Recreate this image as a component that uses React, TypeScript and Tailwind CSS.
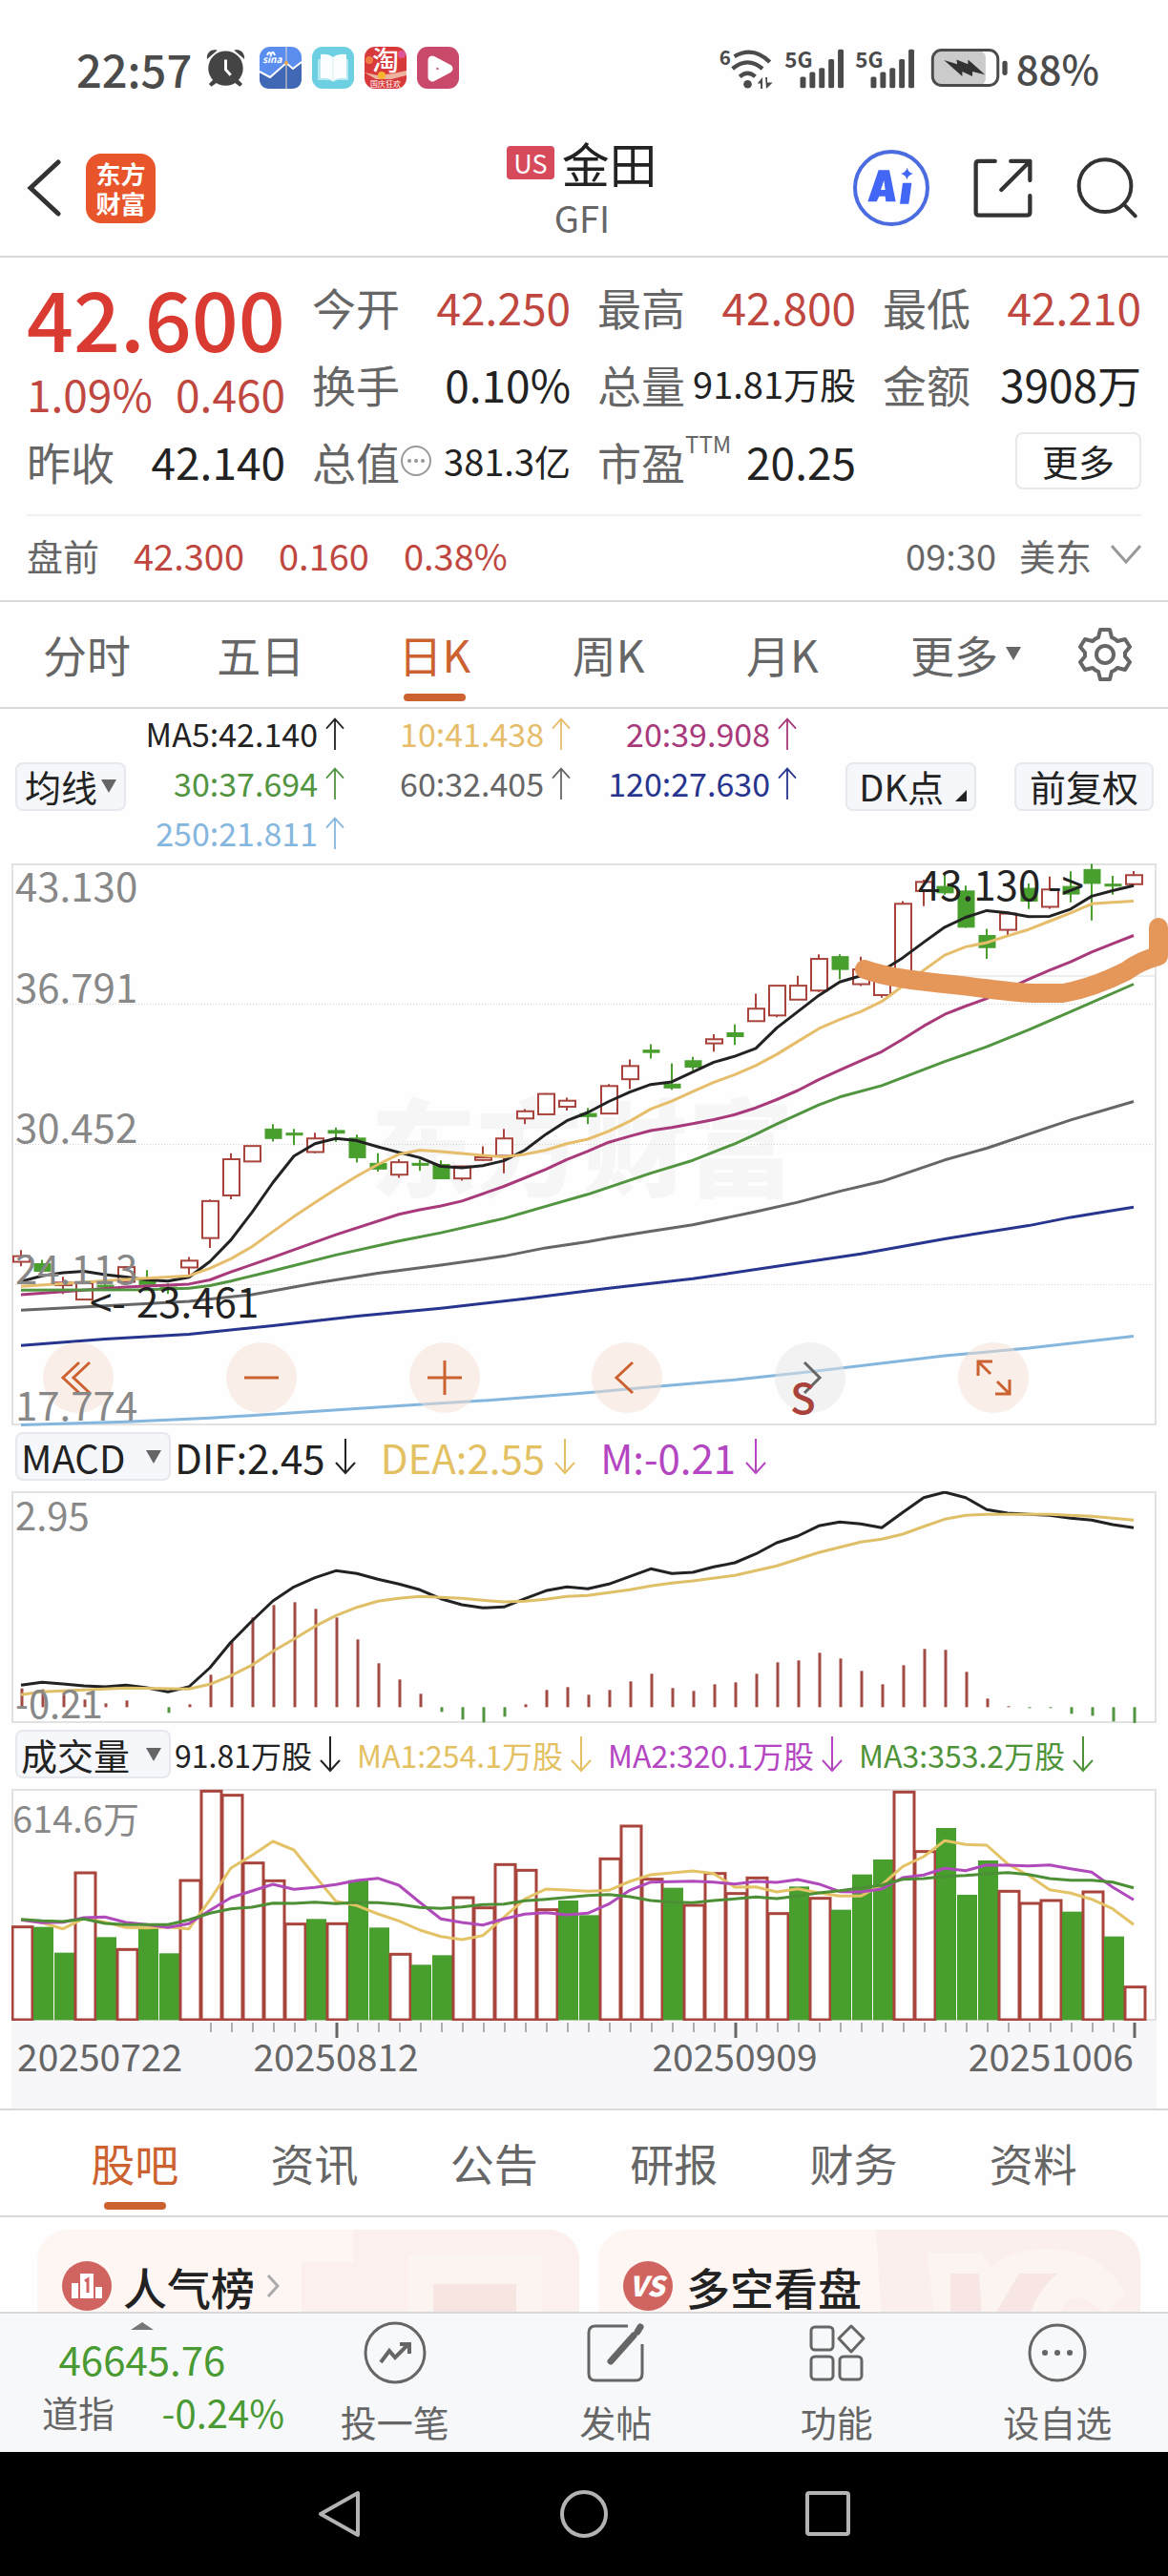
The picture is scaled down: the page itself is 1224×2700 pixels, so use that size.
import React, { useState } from 'react';

const RED = '#a8443c';
const GREEN = '#489f2e';
const STEP = 22;

type Kind = 'r' | 'g';
type Candle = [Kind, number, number, number, number];
type Bar = [Kind, number];
type Point = [number, number];

// kind, high, body top, body bottom, low
const candles: Candle[] = [
    ['r', 1062, 1078, 1093, 1105], ['g', 1088, 1098, 1118, 1122], ['r', 1133, 1148, 1155, 1178],
    ['r', 1148, 1150, 1193, 1193], ['g', 1138, 1155, 1158, 1165], ['r', 1105, 1107, 1146, 1148],
    ['g', 1115, 1140, 1153, 1155], ['g', 1150, 1160, 1163, 1178], ['r', 1080, 1090, 1108, 1130],
    ['r', 928, 932, 1030, 1056], ['r', 805, 821, 917, 927], ['r', 785, 786, 827, 827],
    ['g', 728, 741, 766, 774], ['g', 741, 752, 755, 784], ['r', 751, 766, 802, 805],
    ['g', 737, 745, 752, 775], ['g', 756, 765, 817, 830], ['g', 805, 832, 847, 854],
    ['r', 821, 829, 862, 870], ['g', 822, 832, 836, 852], ['g', 824, 835, 873, 873],
    ['r', 838, 840, 872, 878], ['r', 787, 816, 823, 826], ['r', 741, 766, 812, 858],
    ['r', 688, 694, 713, 728], ['r', 646, 648, 702, 703], ['r', 658, 666, 682, 692],
    ['g', 685, 700, 708, 728], ['r', 622, 627, 700, 702], ['r', 557, 574, 609, 635],
    ['g', 516, 532, 538, 554], ['g', 567, 622, 632, 637], ['g', 550, 560, 577, 585],
    ['r', 490, 503, 514, 536], ['g', 464, 486, 496, 518], ['r', 382, 422, 455, 456],
    ['r', 360, 361, 440, 445], ['r', 335, 361, 398, 398], ['r', 278, 290, 374, 378],
    ['g', 278, 284, 318, 344], ['r', 284, 318, 357, 362], ['r', 330, 340, 386, 393],
    ['r', 137, 144, 340, 340], ['r', 80, 86, 110, 150], ['g', 60, 98, 115, 120],
    ['g', 96, 110, 206, 208], ['g', 210, 228, 260, 290], ['r', 165, 170, 213, 227],
    ['g', 90, 103, 137, 158], ['r', 72, 106, 152, 157], ['g', 58, 98, 118, 140],
    ['g', 38, 53, 90, 188], ['g', 70, 92, 95, 120], ['r', 57, 68, 92, 96],
];

const series = (values: number[]): Point[] => values.map((v, i) => [i, v]);

const priceLines: { color: string; points: Point[] }[] = [
    { color: '#85b7de', points: [[0, 1525], [5, 1517], [9, 1507], [13, 1493], [18, 1475], [22, 1461], [27, 1440], [30, 1425], [34, 1406], [38, 1382], [44, 1342], [48, 1322], [53, 1290]] },
    { color: '#27358f', points: [[0, 1315], [4, 1298], [8, 1285], [12, 1262], [16, 1237], [20, 1216], [24, 1191], [28, 1163], [32, 1138], [36, 1105], [40, 1072], [44, 1032], [48, 997], [50, 975], [53, 948]] },
    { color: '#666666', points: [[0, 1221], [4, 1210], [8, 1198], [11, 1180], [14, 1150], [17, 1123], [20, 1102], [23, 1078], [25, 1056], [27, 1040], [28, 1030], [30, 1012], [32, 995], [35, 960], [37, 935], [39, 906], [41, 880], [44, 823], [46, 792], [50, 717], [53, 668]] },
    { color: '#a83a7b', points: [[0, 1180], [3, 1168], [5, 1160], [8, 1152], [9, 1141], [10, 1120], [12, 1081], [15, 1021], [18, 967], [19, 955], [20, 945], [21, 932], [23, 893], [25, 848], [26, 822], [27, 800], [28, 776], [29, 760], [30, 745], [31, 737], [32, 727], [33, 716], [34, 703], [35, 685], [36, 663], [37, 639], [38, 610], [39, 585], [40, 560], [41, 536], [42, 503], [43, 468], [44, 437], [45, 415], [46, 395], [47, 370], [48, 344], [49, 320], [50, 298], [51, 272], [52, 250], [53, 228]] },
    { color: '#529540', points: [[0, 1168], [6, 1167], [8, 1163], [9, 1156], [10, 1144], [12, 1117], [15, 1075], [18, 1038], [20, 1016], [23, 978], [25, 946], [27, 914], [30, 858], [32, 824], [34, 780], [35, 755], [36, 728], [38, 677], [39, 656], [41, 626], [44, 562], [46, 523], [48, 478], [50, 430], [53, 357]] },
    { color: '#222222', points: series([1145, 1130, 1122, 1118, 1127, 1133, 1141, 1144, 1134, 1092, 1035, 962, 883, 813, 780, 766, 772, 788, 803, 817, 840, 844, 838, 825, 797, 755, 719, 697, 668, 643, 623, 616, 590, 564, 548, 527, 473, 430, 387, 351, 335, 322, 287, 246, 206, 180, 162, 168, 178, 177, 158, 124, 109, 96]) },
    { color: '#e6bd6a', points: [[0, 1158], [3, 1147], [5, 1140], [8, 1130], [9, 1110], [10, 1085], [11, 1053], [12, 1013], [13, 973], [14, 936], [15, 900], [16, 866], [17, 835], [18, 808], [19, 797], [20, 801], [21, 806], [22, 811], [23, 815], [24, 808], [25, 797], [26, 780], [27, 768], [28, 747], [29, 720], [30, 688], [31, 667], [32, 642], [33, 617], [34, 597], [35, 573], [36, 543], [37, 509], [38, 475], [39, 451], [40, 430], [41, 403], [42, 362], [43, 320], [44, 280], [45, 258], [46, 247], [47, 229], [48, 212], [49, 190], [50, 168], [51, 144], [52, 140], [53, 137]] },
];

const macdBars = [835, 838, 855, 870, 882, 873, 894, 912, 885, 792, 688, 612, 573, 564, 585, 612, 681, 756, 807, 852, 909, 933, 942, 924, 885, 840, 831, 855, 840, 813, 789, 834, 843, 822, 816, 789, 753, 747, 723, 741, 780, 822, 762, 711, 714, 783, 867, 891, 897, 897, 915, 921, 939, 944];
const dif = series([825, 816, 821, 827, 830, 825, 833, 846, 830, 770, 690, 623, 560, 516, 487, 465, 474, 492, 507, 525, 553, 572, 582, 579, 553, 528, 516, 522, 507, 483, 459, 474, 470, 453, 440, 412, 377, 356, 324, 312, 318, 330, 282, 235, 218, 235, 273, 284, 288, 291, 300, 306, 320, 330]);
const dea: Point[] = [[0, 855], [1, 846], [3, 840], [5, 834], [8, 837], [9, 822], [10, 795], [11, 762], [12, 718], [13, 680], [14, 640], [15, 606], [16, 580], [17, 561], [18, 552], [19, 546], [20, 549], [21, 552], [22, 558], [23, 563], [24, 561], [25, 555], [26, 546], [27, 543], [28, 534], [29, 525], [30, 513], [31, 504], [32, 497], [34, 480], [36, 450], [38, 408], [40, 375], [41, 366], [42, 350], [43, 326], [44, 303], [45, 291], [46, 288], [49, 288], [51, 294], [53, 306]];

const volumes: Bar[] = [
    ['r', 652], ['g', 655], ['g', 736], ['r', 482], ['g', 687], ['r', 723], ['g', 655], ['g', 738], ['r', 506],
    ['r', 225], ['r', 238], ['r', 451], ['r', 507], ['r', 643], ['g', 630], ['r', 642], ['g', 508], ['g', 657],
    ['r', 738], ['g', 774], ['g', 744], ['r', 560], ['r', 592], ['r', 456], ['r', 474], ['r', 598], ['g', 572],
    ['g', 618], ['r', 438], ['r', 335], ['r', 502], ['g', 532], ['r', 584], ['r', 484], ['r', 547], ['r', 498],
    ['r', 610], ['g', 528], ['r', 562], ['g', 601], ['g', 490], ['g', 443], ['r', 228], ['r', 415], ['g', 344],
    ['g', 554], ['g', 446], ['r', 540], ['r', 578], ['r', 569], ['g', 607], ['r', 542], ['g', 685], ['r', 841],
];
const volumeLines = [
    { color: '#e3c366', points: series([633, 642, 661, 628, 640, 657, 658, 655, 661, 570, 470, 430, 386, 413, 495, 574, 588, 614, 636, 665, 685, 695, 682, 625, 567, 536, 539, 543, 540, 512, 491, 485, 479, 487, 530, 529, 545, 535, 548, 558, 558, 523, 465, 434, 384, 396, 398, 457, 493, 538, 549, 568, 598, 648]) },
    { color: '#b04abb', points: series([633, 642, 640, 626, 624, 641, 648, 657, 645, 603, 563, 542, 521, 537, 531, 522, 509, 502, 524, 578, 630, 641, 649, 630, 615, 610, 617, 612, 583, 540, 514, 513, 511, 514, 520, 512, 515, 506, 520, 544, 545, 536, 500, 492, 471, 478, 460, 461, 463, 460, 472, 483, 530, 570]) },
    { color: '#4c8f35', points: series([631, 636, 638, 630, 644, 648, 648, 648, 633, 612, 598, 593, 580, 581, 577, 582, 578, 579, 584, 594, 597, 592, 585, 583, 573, 568, 562, 556, 553, 560, 572, 577, 579, 572, 567, 561, 566, 558, 548, 541, 532, 524, 505, 503, 496, 493, 488, 484, 490, 503, 508, 508, 514, 532]) },
];

const xAt = (i: number) => 10 + i * STEP;
const priceY = (v: number) => (v - 37) / 2.529;
const macdY = (v: number) => (v - 215) / 3;
const volumeY = (v: number) => (v - 221) / 3;

interface LineProps {
    points: Point[];
    color: string;
    y: (v: number) => number;
}

const Line: React.FC<LineProps> = ({ points, color, y }) => (
    <polyline
        points={points.map(([i, v]) => `${xAt(i)},${y(v).toFixed(1)}`).join(' ')}
        fill="none"
        stroke={color}
        strokeWidth="3"
        strokeLinejoin="round"
    />
);

const Frame = ({ height }: { height: number }) => (
    <rect x="1" y="1" width="1198" height={height - 2} fill="none" stroke="#e2e2e2" strokeWidth="2" />
);

const PriceChart = () => (
    <svg viewBox="0 0 1200 589" className="block h-auto w-full overflow-visible" role="img" aria-label="日K">
        <text x="376" y="341" fontSize="111" fontWeight="900" fill="#f6f6f6">东方财富</text>
        <Frame height={589} />
        {[410, 782, 1154].map((v) => (
            <line key={v} x1="1" x2="1199" y1={priceY(v)} y2={priceY(v)} stroke="#d0d0d0" strokeDasharray="1 2" />
        ))}
        <line x1="940" x2="1199" y1="118" y2="118" stroke="#dcdcdc" />
        {candles.map(([kind, high, top, bottom, low], i) => {
            const color = kind === 'r' ? RED : GREEN;
            const h = Math.max(priceY(bottom) - priceY(top), 2);
            return (
                <g key={i}>
                    <line x1={xAt(i)} x2={xAt(i)} y1={priceY(high)} y2={priceY(low)} stroke={color} strokeWidth="2" />
                    <rect
                        x={xAt(i) - 8}
                        y={priceY(top)}
                        width="17"
                        height={h}
                        fill={kind === 'r' ? '#fefefe' : color}
                        stroke={color}
                        strokeWidth={kind === 'r' ? 2 : 1}
                    />
                </g>
            );
        })}
        {priceLines.map((line) => (
            <Line key={line.color} points={line.points} color={line.color} y={priceY} />
        ))}
        <g fontSize="42" fill="#888888">
            <text x="4" y="40">43.130</text>
            <text x="4" y="146">36.791</text>
            <text x="4" y="293">30.452</text>
            <text x="4" y="441">24.113</text>
        </g>
        <g fontSize="42" fill="#222222">
            <text y="476"><tspan x="82">&lt;-</tspan><tspan x="131">23.461</tspan></text>
            <text y="39"><tspan x="950">43.130</tspan><tspan x="1086">-&gt;</tspan></text>
        </g>
        <path
            d="M894 111 C915 119 945 123 987 127 C1030 132 1045 135 1070 136 L1102 136 C1125 132 1150 122 1168 113 C1180 104 1190 100 1202 97 L1202 67"
            fill="none"
            stroke="#e5975a"
            strokeWidth="20"
            strokeLinecap="round"
            strokeLinejoin="round"
        />
    </svg>
);

const MacdChart = () => (
    <svg viewBox="0 0 1200 243" className="block h-auto w-full" role="img" aria-label="MACD">
        <Frame height={243} />
        {macdBars.map((v, i) => (
            <line
                key={i}
                x1={xAt(i) + 1}
                x2={xAt(i) + 1}
                y1={macdY(894)}
                y2={macdY(v)}
                stroke={v > 894 ? '#529540' : '#a14b45'}
                strokeWidth="3"
            />
        ))}
        <Line points={dif} color="#222222" y={macdY} />
        <Line points={dea} color="#dfc068" y={macdY} />
        <g fontSize="40" fill="#888888">
            <text x="4" y="41">2.95</text>
            <text x="4" y="238">-0.21</text>
        </g>
    </svg>
);

const VolumeChart = () => (
    <svg viewBox="0 0 1200 243" className="block h-auto w-full" role="img" aria-label="成交量">
        <Frame height={243} />
        {volumes.map(([kind, v], i) =>
            kind === 'r' ? (
                <rect key={i} x={xAt(i) - 9} y={volumeY(v) + 1} width="21" height={volumeY(944) - volumeY(v)} fill="#fefefe" stroke={RED} strokeWidth="3" />
            ) : (
                <rect key={i} x={xAt(i) - 9} y={volumeY(v)} width="21" height={volumeY(948) - volumeY(v)} fill={GREEN} />
            )
        )}
        {volumeLines.map((line) => (
            <Line key={line.color} points={line.points} color={line.color} y={volumeY} />
        ))}
        <text x="1" y="46" fontSize="38" fill="#888888">614.6万</text>
    </svg>
);

const DateAxis = () => (
    <svg viewBox="0 0 1200 92" className="block h-auto w-full bg-[#f7f7fa]">
        {candles.map((_, i) => {
            if (i < 9) return null;
            const major = i === 15 || i === 34 || i === 53;
            return (
                <line key={i} x1={xAt(i) + 1} x2={xAt(i) + 1} y1="2" y2={major ? 18 : 12} stroke="#666666" strokeWidth={major ? 3 : 1} />
            );
        })}
        <g fontSize="39" fill="#666666">
            <text x="6" y="53">20250722</text>
            <text x={xAt(15)} y="53" textAnchor="middle">20250812</text>
            <text x={xAt(34)} y="53" textAnchor="middle">20250909</text>
            <text x={xAt(53)} y="53" textAnchor="end">20251006</text>
        </g>
    </svg>
);

const Arrow = ({ down = false }: { down?: boolean }) => (
    <svg viewBox="0 0 22 40" className={down ? 'h-10 w-[22px]' : 'h-9 w-[20px] rotate-180'} fill="none" stroke="currentColor" strokeWidth="2">
        <path d="M11 1V37M1 26L11 37L21 26" />
    </svg>
);

const Caret = () => (
    <svg viewBox="0 0 16 14" className="h-[14px] w-4 text-[#666]">
        <path d="M0 0H16L8 14Z" fill="currentColor" />
    </svg>
);

const Signal = () => (
    <svg viewBox="248 55 188 130" className="h-[43px] w-[62px] overflow-visible" fill="currentColor">
        <text x="246" y="117" fontSize="68" fontWeight="700">5G</text>
        <rect x="295" y="147" width="18" height="36" rx="5" />
        <rect x="325" y="132" width="18" height="51" rx="5" />
        <rect x="355" y="119" width="18" height="64" rx="5" />
        <rect x="385" y="91" width="18" height="92" rx="5" />
        <rect x="415" y="60" width="18" height="123" rx="5" />
    </svg>
);

const StatusBar = () => (
    <div className="flex h-[138px] items-center justify-between pl-20 pr-[72px] pt-1 text-[#4b4b4b]">
        <div className="flex items-center gap-[11px]">
            <span className="mr-1 text-[47px] font-medium leading-none">22:57</span>
            <svg viewBox="470 65 126 122" className="mr-1 h-10 w-[41px]" fill="#444">
                <path d="M473 98C470 78 488 64 506 70ZM593 98C596 78 578 64 560 70Z" />
                <circle cx="533" cy="128" r="56" />
                <path d="M492 165L479 178L487 187L505 174ZM574 165L587 178L579 187L561 174Z" />
                <path d="M533 100V132L549 150" stroke="#fff" strokeWidth="9" fill="none" />
            </svg>
            <svg viewBox="0 0 44 44" className="size-11">
                <rect width="44" height="44" rx="11" fill="#5b8def" />
                <path d="M0 26L11 32L28 17L35 23L44 16V33Q44 44 33 44H11Q0 44 0 33Z" fill="#4168b5" />
                <path d="M0 26L11 32L28 17L35 23L44 16" fill="none" stroke="#fff" strokeWidth="2" />
                <path d="M28 0V44" stroke="#e8dccb" />
                <circle cx="28" cy="17" r="2" fill="#f2a54a" />
                <path d="M8 9Q10 4 12 8Q14 3 16 9" fill="none" stroke="#fff" strokeWidth="2" />
                <text x="3" y="17" fontSize="10" fontWeight="700" fontStyle="italic" fill="#fff">sina</text>
            </svg>
            <svg viewBox="0 0 44 44" className="size-11">
                <rect width="44" height="44" rx="11" fill="#6ccfe2" />
                <path d="M6 13H38V35H26L22 37L18 35H6Z" fill="#b4e7f0" />
                <path d="M22 11Q17 7 9 8V33Q17 32 22 36Q27 32 36 33V8Q27 7 22 11Z" fill="#fbfeff" />
                <path d="M22 11V36" stroke="#d5eef4" />
            </svg>
            <svg viewBox="0 0 44 44" className="size-11 overflow-visible">
                <rect width="44" height="44" rx="11" fill="#d8393a" />
                <path d="M0 27L14 30L30 28L44 25V30L28 34H12Z" fill="#ecb3a0" />
                <circle cx="5" cy="14" r="4" fill="#ee7d45" />
                <circle cx="39" cy="8" r="4" fill="#e0559a" />
                <circle cx="18" cy="30" r="4" fill="#f7b52f" />
                <text x="22" y="25" textAnchor="middle" fontSize="28" fontWeight="500" fill="#fff">淘</text>
                <text x="22" y="42" textAnchor="middle" fontSize="8" fill="#fff">国庆狂欢</text>
            </svg>
            <svg viewBox="0 0 44 44" className="size-11">
                <rect width="44" height="44" rx="11" fill="#c9496a" />
                <path d="M16 14L33 23L16 32Z" fill="#c64a63" stroke="#fff" strokeWidth="9" strokeLinejoin="round" />
            </svg>
        </div>
        <div className="flex items-center gap-3">
            <svg viewBox="45 50 175 135" className="h-[45px] w-[58px] overflow-visible" fill="currentColor">
                <text x="47" y="107" fontSize="62" fontWeight="700">6</text>
                <path d="M95 80Q155 46 207 98M89 119Q137 79 184 119M112 144Q137 122 161 144" fill="none" stroke="currentColor" strokeWidth="13" />
                <circle cx="137" cy="168" r="13" />
                <path d="M168 166L184 146V182H178V166ZM193 146H199V163H216L196 182Z" />
            </svg>
            <Signal />
            <Signal />
            <svg viewBox="705 58 248 126" className="ml-1 h-[42px] w-[82px]">
                <rect x="716" y="68" width="164" height="108" rx="20" fill="#cbcbcb" />
                <rect x="712" y="65" width="207" height="112" rx="28" fill="none" stroke="currentColor" strokeWidth="9" />
                <rect x="933" y="99" width="16" height="46" rx="7" fill="currentColor" />
                <path d="M748 97L790 110L788 95L824 110V95L878 143L838 133V148L806 133V148Z" fill="#333" />
            </svg>
            <span className="-ml-1 text-[42px] font-medium leading-none">88%</span>
        </div>
    </div>
);

const Header = () => (
    <header className="grid h-[132px] grid-cols-[1fr_auto_1fr] items-center border-b-2 border-[#d9d9db] pb-3 pl-7 pr-8">
        <div className="flex items-center gap-[26px]">
            <button type="button" aria-label="返回">
                <svg viewBox="0 0 36 60" className="h-[60px] w-9" fill="none" stroke="#333" strokeWidth="5" strokeLinecap="round">
                    <path d="M33 3L4 30L33 57" />
                </svg>
            </button>
            <div className="flex size-[73px] flex-col items-center justify-center rounded-2xl bg-[#e8552b] text-[26px] font-bold leading-[31px] text-white">
                <span>东方</span>
                <span>财富</span>
            </div>
        </div>
        <div className="flex flex-col items-center">
            <h1 className="flex items-center gap-2 text-[50px] leading-[62px] text-[#222]">
                <span className="rounded-sm bg-[#d64a5c] px-[7px] text-[27px] leading-[35px] text-white">US</span>
                金田
            </h1>
            <span className="text-[38px] leading-[54px] text-[#666]">GFI</span>
        </div>
        <div className="flex items-center justify-end gap-[46px]">
            <button type="button" aria-label="Ai">
                <svg viewBox="448 380 240 240" className="size-20">
                    <circle cx="568" cy="500" r="114" fill="none" stroke="#4b6be0" strokeWidth="12" />
                    <path d="M528 444H562L582 543H551L549 526H530L522 543H494ZM545 476L535 506H549Z" fill="#4266f5" fillRule="evenodd" />
                    <path d="M604 484H632L623 550H595Z" fill="#4266f5" />
                    <path d="M618 436Q621 452 637 455Q621 459 617 474Q614 459 598 455Q614 451 618 436Z" fill="#4266f5" />
                </svg>
            </button>
            <button type="button" aria-label="分享">
                <svg viewBox="824 406 188 188" className="size-[62px]" fill="none" stroke="#333" strokeWidth="13" strokeLinecap="round" strokeLinejoin="round">
                    <path d="M893 415H842Q832 415 832 425V577Q832 587 842 587H994Q1004 587 1004 577V525M943 415H1004V476M1004 415L913 506" />
                </svg>
            </button>
            <button type="button" aria-label="搜索">
                <svg viewBox="1160 401 194 194" className="size-[64px]" fill="none" stroke="#333" strokeWidth="12" strokeLinecap="round">
                    <circle cx="1251" cy="491" r="83" />
                    <path d="M1310 549L1347 587" />
                </svg>
            </button>
        </div>
    </header>
);

interface QuoteItemProps {
    label: React.ReactNode;
    value: string;
    red?: boolean;
    small?: boolean;
}

const QuoteItem: React.FC<QuoteItemProps> = ({ label, value, red, small }) => (
    <div className="flex h-[81px] items-center justify-between whitespace-nowrap">
        <dt className="flex items-center text-[#666]">{label}</dt>
        <dd className={`${small ? 'text-[38px]' : 'text-[46px]'} ${red ? 'text-[#bf4740]' : 'text-[#222]'}`}>{value}</dd>
    </div>
);

const Quote = () => (
    <section className="px-7">
        <div className="grid grid-cols-4 gap-x-7 pb-4 pt-[10px] text-[46px] leading-[60px]">
            <div className="flex flex-col">
                <div className="flex h-[102px] items-end text-[86px] font-medium leading-[100px] text-[#d93b32]">42.600</div>
                <div className="flex h-[60px] items-center justify-between text-[#bf4740]">
                    <span>1.09%</span>
                    <span>0.460</span>
                </div>
                <dl><QuoteItem label="昨收" value="42.140" /></dl>
            </div>
            <dl>
                <QuoteItem label="今开" value="42.250" red />
                <QuoteItem label="换手" value="0.10%" />
                <QuoteItem
                    label={
                        <>
                            总值
                            <svg viewBox="0 0 34 34" className="size-[34px]" fill="none" stroke="#999" strokeWidth="2">
                                <circle cx="17" cy="17" r="15" />
                                <path d="M10 17H10.100M17 17H17.100M24 17H24.100" strokeWidth="4" strokeLinecap="round" />
                            </svg>
                        </>
                    }
                    value="381.3亿"
                    small
                />
            </dl>
            <dl>
                <QuoteItem label="最高" value="42.800" red />
                <QuoteItem label="总量" value="91.81万股" small />
                <QuoteItem label={<>市盈<span className="self-start text-2xl leading-6">TTM</span></>} value="20.25" />
            </dl>
            <div>
                <dl>
                    <QuoteItem label="最低" value="42.210" red />
                    <QuoteItem label="金额" value="3908万" />
                </dl>
                <div className="flex h-[81px] items-center justify-end">
                    <button type="button" className="h-[60px] w-[132px] rounded-lg border-2 border-[#e8e8e8] text-[38px] leading-none text-[#222]">更多</button>
                </div>
            </div>
        </div>
        <div className="flex h-[90px] items-center border-t-2 border-[#f0f0f0] pb-2 text-[38px] text-[#bf4740]">
            <span className="mr-9 text-[#666]">盘前</span>
            <span className="mr-9">42.300</span>
            <span className="mr-9">0.160</span>
            <span>0.38%</span>
            <span className="ml-auto text-[#666]">09:30</span>
            <span className="ml-6 text-[#666]">美东</span>
            <svg viewBox="0 0 32 20" className="ml-5 h-5 w-8" fill="none" stroke="#999" strokeWidth="3">
                <path d="M1 1L16 18L31 1" />
            </svg>
        </div>
    </section>
);

interface TabProps {
    label: string;
    active: boolean;
    caret?: boolean;
    onClick: () => void;
}

const Tab: React.FC<TabProps> = ({ label, active, caret, onClick }) => (
    <button type="button" onClick={onClick} className="flex flex-1 flex-col items-center">
        <span className={`flex h-[96px] items-center gap-2 pt-3 text-[46px] ${active ? 'text-[#cb622f]' : 'text-[#666]'} ${caret ? 'pl-5' : ''}`}>
            {label}
            {caret && <Caret />}
        </span>
        <span className={`h-2 w-[65px] rounded-full ${active ? 'bg-[#cb622f]' : ''}`} />
    </button>
);

const periods = ['分时', '五日', '日K', '周K', '月K', '更多'];

const PeriodTabs = () => {
    const [active, setActive] = useState('日K');
    return (
        <nav className="flex h-[114px] border-y-2 border-[#d9d9db]">
            {periods.map((p) => (
                <Tab key={p} label={p} active={p === active} caret={p === '更多'} onClick={() => setActive(p)} />
            ))}
            <button type="button" aria-label="设置" className="flex w-[131px] items-center pl-[37px]">
                <svg viewBox="0 0 56 58" className="h-[58px] w-14" fill="none" stroke="#666" strokeWidth="4" strokeLinejoin="round">
                    <path d="M23 3H33L35 11Q38 12 41 15L49 13L54 21L49 27V31L54 37L49 45L41 43Q38 46 35 47L33 55H23L21 47Q18 46 15 43L7 45L2 37L7 31V27L2 21L7 13L15 15Q18 12 21 11Z" />
                    <circle cx="28" cy="29" r="9" />
                </svg>
            </button>
        </nav>
    );
};

const averages = [
    { text: 'MA5:42.140', color: 'text-[#222]' },
    { text: '10:41.438', color: 'text-[#e6bd6a]' },
    { text: '20:39.908', color: 'text-[#a83a7b]' },
    { text: '30:37.694', color: 'text-[#529540]' },
    { text: '60:32.405', color: 'text-[#666]' },
    { text: '120:27.630', color: 'text-[#27358f]' },
    { text: '250:21.811', color: 'text-[#85b7de]' },
];

const chip = 'flex h-[51px] items-center whitespace-nowrap rounded-lg border-2 border-[#e6e8ed] bg-[#f6f7fa] text-[#222]';

const AverageRow = () => (
    <div className="flex items-center pl-4 pr-[15px]">
        <button type="button" className={`${chip} gap-1 px-2 text-[38px] leading-none`}>
            均线
            <Caret />
        </button>
        <ul className="-ml-2 grid w-[711px] grid-cols-3 pb-[6px] text-[34px] leading-[52px]">
            {averages.map((a) => (
                <li key={a.text} className={`flex items-center justify-end gap-2 ${a.color}`}>
                    {a.text}
                    <Arrow />
                </li>
            ))}
        </ul>
        <div className="ml-auto flex gap-10">
            <button type="button" className={`${chip} gap-3 pl-3 pr-2 text-[38px] leading-none`}>
                DK点
                <svg viewBox="0 0 12 12" className="mb-2 size-3 self-end"><path d="M12 0V12H0Z" fill="#222" /></svg>
            </button>
            <button type="button" className={`${chip} px-[14px] text-[38px] leading-none`}>前复权</button>
        </div>
    </div>
);

const controls = [
    { label: '最左', d: 'M38 21L21 37L38 53M49 21L32 37L49 53' },
    { label: '缩小', d: 'M19 37H55' },
    { label: '放大', d: 'M19 37H55M37 19V55' },
    { label: '向左', d: 'M43 21L26 37L43 53' },
    { label: '向右', d: 'M31 21L47 37L31 53' },
    { label: '全屏', d: 'M36 20H21V35M21 20L34 33M39 54H54V39M54 54L41 41' },
];

const ChartPanel = () => (
    <section className="px-3">
        <div className="relative">
            <PriceChart />
            <div className="absolute inset-x-0 bottom-[13px] flex justify-between pl-[33px] pr-[134px]">
                {controls.map((c) => {
                    const off = c.label === '向右';
                    return (
                        <button key={c.label} type="button" aria-label={c.label} className={`rounded-full ${off ? 'bg-[#e6e6e6]/50' : 'bg-[#f6dfd2]/50'}`}>
                            <svg viewBox="0 0 74 74" className="size-[74px]" fill="none" stroke={off ? '#666' : '#cb622f'} strokeWidth="3">
                                <path d={c.d} />
                            </svg>
                        </button>
                    );
                })}
            </div>
            <span className="absolute bottom-0 left-1 text-[42px] leading-[46px] text-[#888]">17.774</span>
            <span className="absolute bottom-1 left-[68%] text-[44px] font-medium leading-[54px] text-[#a8423b]">S</span>
        </div>

        <div className="flex h-[69px] items-center pb-1 text-[42px] leading-none">
            <button type="button" className={`${chip} ml-1 mr-1 w-[163px] justify-between pl-1 pr-2 text-[40px] leading-none`}>
                MACD
                <Caret />
            </button>
            <div className="flex gap-[26px] whitespace-nowrap">
                <span className="flex items-center gap-[10px] text-[#222]">DIF:2.45<Arrow down /></span>
                <span className="flex items-center gap-[10px] text-[#e3c163]">DEA:2.55<Arrow down /></span>
                <span className="flex items-center gap-[10px] text-[#b446c2]">M:-0.21<Arrow down /></span>
            </div>
        </div>
        <MacdChart />

        <div className="flex h-[69px] items-center pb-1 text-[32px] leading-none">
            <button type="button" className={`${chip} ml-1 mr-1 w-[163px] justify-between pl-1 pr-2 text-[38px] leading-none`}>
                成交量
                <Caret />
            </button>
            <div className="flex gap-[17px] whitespace-nowrap">
                <span className="flex items-center gap-2 text-[#222]">91.81万股<Arrow down /></span>
                <span className="flex items-center gap-2 text-[#e3c163]">MA1:254.1万股<Arrow down /></span>
                <span className="flex items-center gap-2 text-[#b446c2]">MA2:320.1万股<Arrow down /></span>
                <span className="flex items-center gap-2 text-[#4f9339]">MA3:353.2万股<Arrow down /></span>
            </div>
        </div>
        <VolumeChart />
        <DateAxis />
    </section>
);

const topics = ['股吧', '资讯', '公告', '研报', '财务', '资料'];

const TopicTabs = () => {
    const [active, setActive] = useState('股吧');
    return (
        <nav className="flex h-[114px] border-y-2 border-[#d9d9db] px-[47px]">
            {topics.map((t) => (
                <Tab key={t} label={t} active={t === active} onClick={() => setActive(t)} />
            ))}
        </nav>
    );
};

const Cards = () => (
    <section className="grid h-[99px] grid-cols-2 gap-5 overflow-hidden pl-[39px] pr-[29px] pt-[13px]">
        <a href="#rank" className="relative flex h-40 overflow-hidden rounded-[32px] bg-[#fdf6f3] pl-[26px] pt-[33px]">
            <svg viewBox="0 0 291 160" className="absolute right-0 top-0 h-40 w-[291px]">
                <path d="M0 34H54V0H291V160H0Z" fill="#fbf0ee" />
                <path d="M112 26H252V160H112Z" fill="#fcf4f1" />
                <path d="M138 57H225V160H138Z" fill="#f7e5e2" />
            </svg>
            <div className="relative flex h-[52px] items-center gap-3 text-[46px] font-medium leading-none text-[#222]">
                <svg viewBox="0 0 52 52" className="size-[52px]">
                    <circle cx="26" cy="26" r="26" fill="#cf6460" />
                    <path d="M10 23H17V39H10ZM19 13H33V39H19ZM35 27H42V39H35Z" fill="#fff" />
                    <path d="M24 21L27 19V33" fill="none" stroke="#cf6460" strokeWidth="3" />
                </svg>
                人气榜
                <svg viewBox="0 0 14 24" className="h-6 w-[14px]" fill="none" stroke="#aaa" strokeWidth="3">
                    <path d="M2 1L12 12L2 23" />
                </svg>
            </div>
        </a>
        <a href="#vote" className="relative flex h-40 overflow-hidden rounded-[32px] bg-[#fdf6f3] pl-[26px] pt-[33px]">
            <svg viewBox="0 0 277 160" className="absolute right-0 top-0 h-40 w-[277px]">
                <path d="M0 0H277V160H10Z" fill="#fbefed" />
                <path d="M53 24H110L120 40Q150 14 200 22Q240 30 262 66L240 88Q200 50 190 100L185 160H70Z" fill="#fcf4f1" />
                <path d="M78 46H108L112 110L150 46H190Q160 70 155 120H78Z" fill="#f8e6e4" />
            </svg>
            <div className="relative flex h-[52px] items-center gap-[14px] text-[46px] font-medium leading-none text-[#222]">
                <svg viewBox="0 0 52 52" className="size-[52px]">
                    <circle cx="26" cy="26" r="26" fill="#cf6460" />
                    <text x="25" y="37" textAnchor="middle" fontSize="29" fontWeight="900" fontStyle="italic" fill="#fff">VS</text>
                </svg>
                多空看盘
            </div>
        </a>
    </section>
);

const actions = [
    {
        label: '投一笔',
        icon: (
            <>
                <circle cx="33" cy="33" r="31" />
                <path d="M18 43L27 31L33 38L47 24M38 24H48V34" strokeWidth="4" />
            </>
        ),
    },
    {
        label: '发帖',
        icon: (
            <>
                <path d="M46 5H12Q5 5 5 12V55Q5 62 12 62H54Q61 62 61 55V24" />
                <path d="M59 6L56 11M52 15L28 42" strokeWidth="7" strokeLinecap="round" />
            </>
        ),
    },
    {
        label: '功能',
        icon: (
            <>
                <rect x="6" y="6" width="23" height="24" rx="4" />
                <rect x="6" y="37" width="23" height="24" rx="4" />
                <rect x="36" y="37" width="23" height="24" rx="4" />
                <path d="M48 5L61 18L48 32L35 18Z" strokeLinejoin="round" />
            </>
        ),
    },
    {
        label: '设自选',
        icon: (
            <>
                <circle cx="33" cy="33" r="29" />
                <path d="M20 33H20.100M33 33H33.100M46 33H46.100" strokeWidth="6" strokeLinecap="round" />
            </>
        ),
    },
];

const BottomBar = () => (
    <footer className="flex h-[147px] border-t-2 border-[#d9d9db] bg-[#f7f8fa]">
        <div className="flex w-[298px] flex-col items-center pt-[9px]">
            <svg viewBox="0 0 24 8" className="h-2 w-6">
                <path d="M12 0L24 8H0Z" fill="#777" />
            </svg>
            <span className="text-[42px] leading-[60px] text-[#4a9a33]">46645.76</span>
            <div className="flex w-full items-center justify-between pl-11 text-[38px] leading-[52px] text-[#666]">
                道指
                <span className="text-[40px] text-[#4a9a33]">-0.24%</span>
            </div>
        </div>
        {actions.map((a) => (
            <button key={a.label} type="button" className="flex flex-1 flex-col items-center pt-2 text-[38px] leading-[46px] text-[#666]">
                <svg viewBox="0 0 66 66" className="mb-4 size-[66px]" fill="none" stroke="#666" strokeWidth="3">
                    {a.icon}
                </svg>
                {a.label}
            </button>
        ))}
    </footer>
);

const SystemNav = () => (
    <div className="flex h-[130px] items-center justify-center gap-[206px] bg-black">
        {[
            { label: 'back', shape: <path d="M44 3V47L5 25Z" /> },
            { label: 'home', shape: <circle cx="25" cy="25" r="23" /> },
            { label: 'recent', shape: <rect x="3" y="3" width="43" height="43" rx="2" /> },
        ].map((b) => (
            <button key={b.label} type="button" aria-label={b.label}>
                <svg viewBox="0 0 50 50" className="size-[50px]" fill="none" stroke="#b3b3b3" strokeWidth="4" strokeLinejoin="round">
                    {b.shape}
                </svg>
            </button>
        ))}
    </div>
);

const App: React.FC = () => {
    return (
        <div className="w-full bg-[#fefefe] font-['Noto_Sans_CJK_SC','Noto_Sans',sans-serif]">
            <StatusBar />
            <Header />
            <Quote />
            <PeriodTabs />
            <AverageRow />
            <ChartPanel />
            <TopicTabs />
            <Cards />
            <BottomBar />
            <SystemNav />
        </div>
    );
};

export default App;
